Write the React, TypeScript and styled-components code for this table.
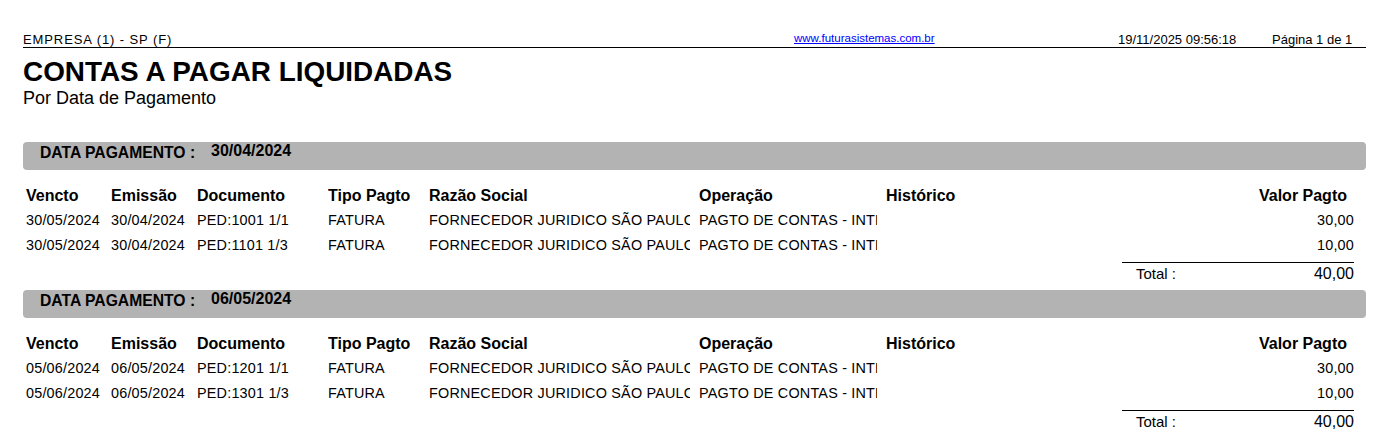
import styled, { createGlobalStyle } from "styled-components";

const GlobalStyle = createGlobalStyle`
  html, body {
    margin: 0;
    padding: 0;
    background: #ffffff;
  }
  body {
    font-family: "Liberation Sans", Arial, sans-serif;
    color: #000000;
  }
`;

const StPage = styled.div`
  width: 1343px;
  padding: 33px 0 0 23px;
`;

const StTopBar = styled.header`
  display: grid;
  grid-template-columns: 771px 324px 154px 1fr;
  align-items: end;
  height: 14px;
  border-bottom: 1px solid #000;
  font-size: 13px;
  line-height: 14px;
  white-space: nowrap;
`;

const StCompany = styled.span`
  letter-spacing: 0.9px;
`;

const StSite = styled.a`
  font-size: 11.5px;
  line-height: 14px;
  color: #0000ff;
  text-decoration: underline;
  position: relative;
  top: -2px;
`;

const StTitle = styled.h1`
  margin: 8px 0 0;
  font-size: 27.9px;
  line-height: 32px;
  font-weight: 700;
`;

const StSubtitle = styled.div`
  font-size: 18px;
  line-height: 20px;
  margin-bottom: 34px;
`;

const StGroups = styled.div`
  display: flex;
  flex-direction: column;
  gap: 5px;
`;

const StBand = styled.div`
  display: grid;
  grid-template-columns: 171px 1fr;
  align-items: start;
  height: 28px;
  padding-left: 17px;
  border-radius: 4px;
  background: #b3b3b3;
  font-weight: 700;
`;

const StBandLabel = styled.span`
  padding-top: 2px;
  font-size: 15.7px;
  line-height: 18px;
`;

const StBandDate = styled.span`
  font-size: 16px;
  line-height: 18px;
`;

const StGrid = styled.div`
  display: grid;
  grid-template-columns: 85px 86px 131px 101px 270px 187px 1fr 120px;
  padding: 0 12px 0 3px;
`;

const StHeadRow = styled(StGrid)`
  margin-top: 13px;
  font-size: 16px;
  line-height: 25px;
  font-weight: 700;
`;

const StDataRow = styled(StGrid)`
  font-size: 14.4px;
  line-height: 25px;
  letter-spacing: 0.2px;
`;

const StCell = styled.span<{ $w?: number; $right?: boolean; $pad?: number }>`
  display: block;
  overflow: hidden;
  white-space: nowrap;
  width: ${({ $w }) => ($w ? `${$w}px` : "auto")};
  text-align: ${({ $right }) => ($right ? "right" : "left")};
  padding-right: ${({ $pad }) => $pad ?? 0}px;
`;

const StTotal = styled.div`
  display: flex;
  justify-content: space-between;
  align-self: flex-end;
  width: 218px;
  margin: 4px 12px 0 0;
  padding-left: 14px;
  border-top: 1px solid #000;
  font-size: 16px;
  line-height: 22px;
`;

const StTotalLabel = styled.span`
  font-size: 15px;
`;

const StGroup = styled.section`
  display: flex;
  flex-direction: column;
`;

interface IRow {
  vencto: string;
  emissao: string;
  documento: string;
  tipo: string;
  razao: string;
  operacao: string;
  historico: string;
  valor: string;
}

interface IGroup {
  data: string;
  total: string;
  rows: IRow[];
}

const groups: IGroup[] = [
  {
    data: "30/04/2024",
    total: "40,00",
    rows: [
      {
        vencto: "30/05/2024",
        emissao: "30/04/2024",
        documento: "PED:1001 1/1",
        tipo: "FATURA",
        razao: "FORNECEDOR JURIDICO SÃO PAULO",
        operacao: "PAGTO DE CONTAS - INTERNO",
        historico: "",
        valor: "30,00",
      },
      {
        vencto: "30/05/2024",
        emissao: "30/04/2024",
        documento: "PED:1101 1/3",
        tipo: "FATURA",
        razao: "FORNECEDOR JURIDICO SÃO PAULO",
        operacao: "PAGTO DE CONTAS - INTERNO",
        historico: "",
        valor: "10,00",
      },
    ],
  },
  {
    data: "06/05/2024",
    total: "40,00",
    rows: [
      {
        vencto: "05/06/2024",
        emissao: "06/05/2024",
        documento: "PED:1201 1/1",
        tipo: "FATURA",
        razao: "FORNECEDOR JURIDICO SÃO PAULO",
        operacao: "PAGTO DE CONTAS - INTERNO",
        historico: "",
        valor: "30,00",
      },
      {
        vencto: "05/06/2024",
        emissao: "06/05/2024",
        documento: "PED:1301 1/3",
        tipo: "FATURA",
        razao: "FORNECEDOR JURIDICO SÃO PAULO",
        operacao: "PAGTO DE CONTAS - INTERNO",
        historico: "",
        valor: "10,00",
      },
    ],
  },
];

const App = () => {
  return (
    <StPage>
      <GlobalStyle />
      <StTopBar>
        <StCompany>EMPRESA (1) - SP (F)</StCompany>
        <StSite href="#">www.futurasistemas.com.br</StSite>
        <span>19/11/2025 09:56:18</span>
        <span>Página 1 de 1</span>
      </StTopBar>
      <StTitle>CONTAS A PAGAR LIQUIDADAS</StTitle>
      <StSubtitle>Por Data de Pagamento</StSubtitle>

      <StGroups>
        {groups.map((group) => (
          <StGroup key={group.data}>
            <StBand>
              <StBandLabel>DATA PAGAMENTO :</StBandLabel>
              <StBandDate>{group.data}</StBandDate>
            </StBand>
            <StHeadRow>
              <StCell>Vencto</StCell>
              <StCell>Emissão</StCell>
              <StCell>Documento</StCell>
              <StCell>Tipo Pagto</StCell>
              <StCell>Razão Social</StCell>
              <StCell>Operação</StCell>
              <StCell>Histórico</StCell>
              <StCell $right $pad={7}>
                Valor Pagto
              </StCell>
            </StHeadRow>
            {group.rows.map((row) => (
              <StDataRow key={row.documento}>
                <StCell>{row.vencto}</StCell>
                <StCell>{row.emissao}</StCell>
                <StCell>{row.documento}</StCell>
                <StCell>{row.tipo}</StCell>
                <StCell $w={261}>{row.razao}</StCell>
                <StCell $w={178}>{row.operacao}</StCell>
                <StCell>{row.historico}</StCell>
                <StCell $right>{row.valor}</StCell>
              </StDataRow>
            ))}
            <StTotal>
              <StTotalLabel>Total :</StTotalLabel>
              <span>{group.total}</span>
            </StTotal>
          </StGroup>
        ))}
      </StGroups>
    </StPage>
  );
};

export default App;
